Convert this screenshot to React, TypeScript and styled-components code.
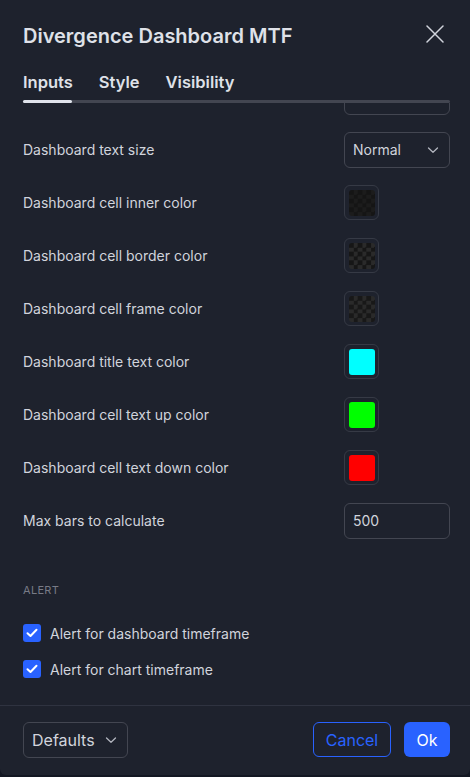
import React, { useLayoutEffect, useRef } from "react";
import styled, { createGlobalStyle, css } from "styled-components";

const Global = createGlobalStyle`
  html, body { margin: 0; padding: 0; background: #131722; }
  body { font-family: Inter, "Noto Sans", sans-serif; -webkit-font-smoothing: antialiased; }
  * { box-sizing: border-box; }
`;

const Dialog = styled.div`
  width: 470px;
  height: 775px;
  background: #1e222d;
  border-radius: 0 0 6px 6px;
  display: flex;
  flex-direction: column;
  color: #d1d4dc;
  overflow: hidden;
`;

const Header = styled.div`
  display: flex;
  align-items: center;
  justify-content: space-between;
  padding: 24px 20px 0 23px;
  height: 48px;
`;

const Title = styled.div`
  font-size: 20px;
  line-height: 24px;
  font-weight: 600;
  color: #dfe1e8;
`;

const CloseBtn = styled.div`
  width: 30px;
  height: 30px;
  display: flex;
  align-items: center;
  justify-content: center;
  margin-top: -4px;
`;

const Tabs = styled.div`
  margin: 22px 20px 0 23px;
  display: flex;
  flex-direction: column;
`;

const TabRow = styled.div`
  display: flex;
  gap: 26px;
  height: 24px;
  align-items: center;
`;

const Tab = styled.div`
  font-size: 16.5px;
  font-weight: 600;
  color: #dfe1e8;
  line-height: 24px;
`;

const Track = styled.div`
  margin-top: 6px;
  height: 3px;
  border-radius: 2px;
  background: #434651;
  display: flex;
`;

const Thumb = styled.div`
  width: 49px;
  height: 3px;
  border-radius: 2px;
  background: #e0e3eb;
`;

const Scroll = styled.div`
  flex: 1;
  overflow: hidden;
`;

const Content = styled.div`
  padding: 20px 20px 20px 23px;
`;

const Row = styled.div`
  height: 53px;
  display: flex;
  align-items: center;
  justify-content: space-between;
`;

const Label = styled.div`
  font-size: 14px;
  color: #d1d4dc;
`;

const SelectBox = styled.div<{ $w: number; $fs?: number }>`
  width: ${(p) => p.$w}px;
  height: 36px;
  border: 1px solid #434651;
  border-radius: 6px;
  display: flex;
  align-items: center;
  justify-content: space-between;
  padding: 0 10px 0 8px;
  font-size: ${(p) => p.$fs ?? 14}px;
  color: #d1d4dc;
`;

const InputBox = styled.div`
  width: 106px;
  height: 36px;
  margin-left: auto;
  border: 1px solid #434651;
  border-radius: 6px;
  display: flex;
  align-items: center;
  padding: 0 8px;
  font-size: 14px;
  color: #d1d4dc;
`;

const SwatchSlot = styled.div`
  width: 106px;
  display: flex;
`;

const SwatchBox = styled.div`
  width: 35px;
  height: 35px;
  border: 1px solid #363a45;
  border-radius: 6px;
  display: flex;
  align-items: center;
  justify-content: center;
`;

const checker = (a: string, b: string) => css`
  background-color: ${a};
  background-image: conic-gradient(${b} 25%, ${a} 0 50%, ${b} 0 75%, ${a} 0);
  background-size: 8.66px 8.66px;
`;

const Swatch = styled.div<{ $color?: string; $a?: string; $b?: string }>`
  width: 26px;
  height: 26px;
  border-radius: 3px;
  ${(p) => (p.$color ? css`background: ${p.$color};` : checker(p.$a!, p.$b!))}
`;

const SectionTitle = styled.div`
  margin-top: 35px;
  font-size: 11px;
  line-height: 16px;
  color: #787b86;
  letter-spacing: 0.3px;
`;

const CheckList = styled.div`
  margin-top: 17px;
  display: flex;
  flex-direction: column;
`;

const CheckRow = styled.div`
  height: 36px;
  display: flex;
  align-items: center;
  gap: 9px;
`;

const CheckBox = styled.div`
  width: 18px;
  height: 18px;
  border-radius: 3px;
  background: #2962ff;
  display: flex;
  align-items: center;
  justify-content: center;
`;

const Separator = styled.div`
  height: 1px;
  background: #2f3340;
`;

const Footer = styled.div`
  display: flex;
  padding: 16px 20px 0 23px;
  height: 69px;
  align-items: flex-start;
`;

const Spacer = styled.div`
  flex: 1;
`;

const Button = styled.div<{ $primary?: boolean }>`
  height: 35px;
  border-radius: 6px;
  display: flex;
  align-items: center;
  justify-content: center;
  font-size: 16px;
  padding: 0 12px;
  ${(p) =>
    p.$primary
      ? css`
          background: #2962ff;
          color: #ffffff;
          width: 46px;
          margin-left: 13px;
        `
      : css`
          border: 1px solid #2962ff;
          color: #2962ff;
          width: 78px;
        `}
`;

const Chevron = () => (
  <svg width="12" height="8" viewBox="0 0 12 8" fill="none">
    <path d="M1.5 2L6 6.2L10.5 2" stroke="#b2b5be" strokeWidth="1.3" strokeLinecap="round" strokeLinejoin="round" />
  </svg>
);

const Check = () => (
  <svg width="12" height="10" viewBox="0 0 12 10" fill="none">
    <path d="M1.5 5.2L4.5 8L10.5 1.8" stroke="#fff" strokeWidth="2" strokeLinecap="round" strokeLinejoin="round" />
  </svg>
);

type RowDef =
  | { label: string; kind: "select"; value: string }
  | { label: string; kind: "input"; value: string }
  | { label: string; kind: "swatch"; color?: string; a?: string; b?: string };

const rows: RowDef[] = [
  { label: "", kind: "input", value: "" },
  { label: "Dashboard text size", kind: "select", value: "Normal" },
  { label: "Dashboard cell inner color", kind: "swatch", a: "#151515", b: "#1c1c1c" },
  { label: "Dashboard cell border color", kind: "swatch", a: "#161616", b: "#2a2a2a" },
  { label: "Dashboard cell frame color", kind: "swatch", a: "#181818", b: "#2a2a2a" },
  { label: "Dashboard title text color", kind: "swatch", color: "#00ffff" },
  { label: "Dashboard cell text up color", kind: "swatch", color: "#00ff00" },
  { label: "Dashboard cell text down color", kind: "swatch", color: "#ff0000" },
  { label: "Max bars to calculate", kind: "input", value: "500" },
];

export default function App() {
  const ref = useRef<HTMLDivElement>(null);
  useLayoutEffect(() => {
    if (ref.current) ref.current.scrollTop = 53;
  }, []);
  return (
    <>
      <Global />
      <Dialog>
        <Header>
          <Title>Divergence Dashboard MTF</Title>
          <CloseBtn>
            <svg width="18" height="18" viewBox="0 0 18 18" fill="none">
              <path d="M1 1L17 17M17 1L1 17" stroke="#d1d4dc" strokeWidth="1.5" strokeLinecap="round" />
            </svg>
          </CloseBtn>
        </Header>
        <Tabs>
          <TabRow>
            <Tab>Inputs</Tab>
            <Tab>Style</Tab>
            <Tab>Visibility</Tab>
          </TabRow>
          <Track>
            <Thumb />
          </Track>
        </Tabs>
        <Scroll ref={ref}>
          <Content>
            {rows.map((r, i) => (
              <Row key={i}>
                {r.label && <Label>{r.label}</Label>}
                {r.kind === "select" && (
                  <SelectBox $w={106}>
                    <span>{r.value}</span>
                    <Chevron />
                  </SelectBox>
                )}
                {r.kind === "input" && <InputBox>{r.value}</InputBox>}
                {r.kind === "swatch" && (
                  <SwatchSlot>
                    <SwatchBox>
                      <Swatch $color={r.color} $a={r.a} $b={r.b} />
                    </SwatchBox>
                  </SwatchSlot>
                )}
              </Row>
            ))}
            <SectionTitle>ALERT</SectionTitle>
            <CheckList>
              <CheckRow>
                <CheckBox>
                  <Check />
                </CheckBox>
                <Label>Alert for dashboard timeframe</Label>
              </CheckRow>
              <CheckRow>
                <CheckBox>
                  <Check />
                </CheckBox>
                <Label>Alert for chart timeframe</Label>
              </CheckRow>
            </CheckList>
          </Content>
        </Scroll>
        <Separator />
        <Footer>
          <SelectBox $w={105} $fs={16}>
            <span>Defaults</span>
            <Chevron />
          </SelectBox>
          <Spacer />
          <Button>Cancel</Button>
          <Button $primary>Ok</Button>
        </Footer>
      </Dialog>
    </>
  );
}
